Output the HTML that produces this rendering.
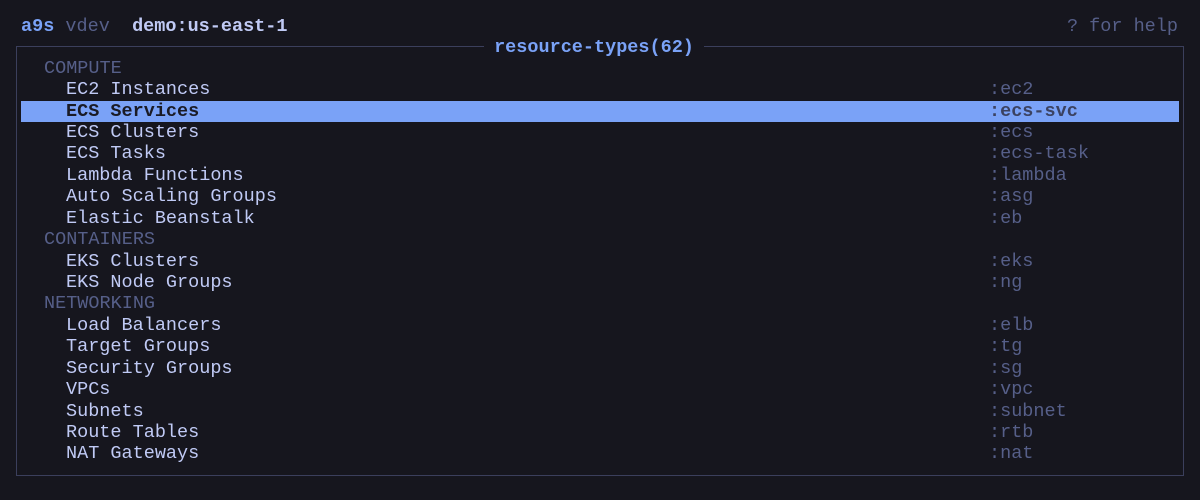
<!DOCTYPE html>
<html><head><style>
html,body{margin:0;padding:0;background:#16161e;width:1200px;height:500px;overflow:hidden}
body{font-family:"Liberation Mono","DejaVu Sans Mono",monospace;font-size:18.5px;color:#c0caf5;position:relative}
.hdr{position:absolute;top:15px;left:21px;white-space:pre;line-height:24px}
.help{position:absolute;top:15px;right:22px;color:#565f89;white-space:pre;line-height:24px}
.box{position:absolute;left:16px;top:46px;width:1166px;height:428px;border:1px solid #3b3f5c}
.title{position:absolute;top:36px;left:0;width:1188px;text-align:center;line-height:24px}
.title span{background:#16161e;color:#7aa2f7;font-weight:bold;padding:0 10px}
.rows{position:absolute;top:57.8px;left:21px;width:1158px}
.r{height:21.43px;line-height:21.43px;white-space:pre;position:relative}
.r .a{position:absolute;left:968px;color:#565f89}
.g{color:#565f89;padding-left:23px}
.i{padding-left:45px}
.sel{background:#7aa2f7;color:#1a1b26;font-weight:bold}
.sel .a{color:#3b4261}
</style></head><body>
<div class="hdr"><b style="color:#7aa2f7">a9s</b> <span style="color:#565f89">vdev</span>  <b>demo:us-east-1</b></div>
<div class="help">? for help</div>
<div class="box"></div>
<div class="title"><span>resource-types(62)</span></div>
<div class="rows">
<div class="r g">COMPUTE</div>
<div class="r i">EC2 Instances<span class="a">:ec2</span></div>
<div class="r i sel">ECS Services<span class="a">:ecs-svc</span></div>
<div class="r i">ECS Clusters<span class="a">:ecs</span></div>
<div class="r i">ECS Tasks<span class="a">:ecs-task</span></div>
<div class="r i">Lambda Functions<span class="a">:lambda</span></div>
<div class="r i">Auto Scaling Groups<span class="a">:asg</span></div>
<div class="r i">Elastic Beanstalk<span class="a">:eb</span></div>
<div class="r g">CONTAINERS</div>
<div class="r i">EKS Clusters<span class="a">:eks</span></div>
<div class="r i">EKS Node Groups<span class="a">:ng</span></div>
<div class="r g">NETWORKING</div>
<div class="r i">Load Balancers<span class="a">:elb</span></div>
<div class="r i">Target Groups<span class="a">:tg</span></div>
<div class="r i">Security Groups<span class="a">:sg</span></div>
<div class="r i">VPCs<span class="a">:vpc</span></div>
<div class="r i">Subnets<span class="a">:subnet</span></div>
<div class="r i">Route Tables<span class="a">:rtb</span></div>
<div class="r i">NAT Gateways<span class="a">:nat</span></div>
</div>
</body></html>
